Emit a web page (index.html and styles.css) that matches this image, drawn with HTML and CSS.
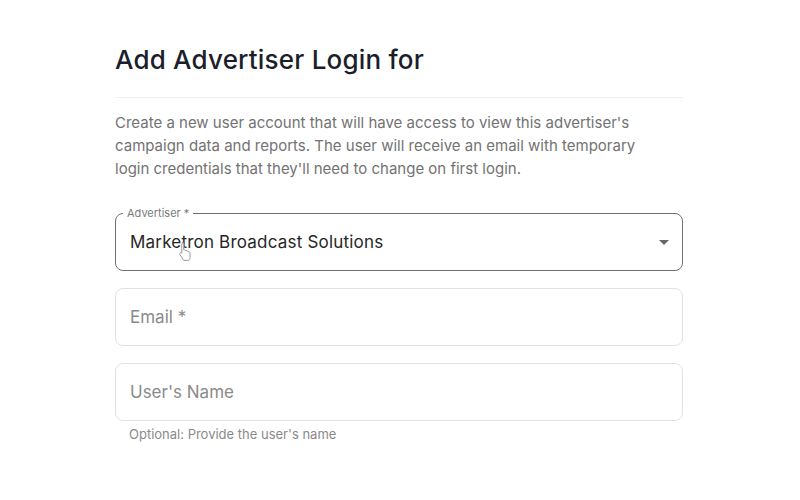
FILE: index.html
```html
<!DOCTYPE html>
<html lang="en">
<head>
    <meta charset="UTF-8">
    <meta name="viewport" content="width=device-width, initial-scale=1.0">
    <title>Add Advertiser Login</title>
    <link rel="stylesheet" href="styles.css">
</head>
<body>
    <div class="container">
        <h1>Add Advertiser Login for</h1>
        <p class="intro">Create a new user account that will have access to view this advertiser's campaign data and reports. The user will receive an email with temporary login credentials that they'll need to change on first login.</p>

        <form class="login-form">
            <div class="field field-select">
                <span class="field-label">Advertiser *</span>
                <span class="field-value">Marketron Broadcast Solutions</span>
                <svg class="caret" width="10" height="5" viewBox="0 0 10 5"><path d="M0 0h10L5 5z" fill="#666"/></svg>
                <!-- pointer cursor from the screen capture -->
                <svg class="cursor" width="16" height="20" viewBox="0 0 14 18"><path d="M4.5 1.5c.8 0 1.4.6 1.4 1.4v5.2l.6-.1c.6-.1 1.2.3 1.3.8l.5-.1c.6-.1 1.2.3 1.3.8l.4-.1c.7-.1 1.3.4 1.4 1.1l.2 3c.1 1.5-.4 2.9-1.3 3.9H5.8L2.4 12.2c-.4-.6-.2-1.3.4-1.6.4-.2 1-.1 1.3.3V2.9c0-.8.6-1.4 1.4-1.4z" fill="#fff" stroke="#999" stroke-width=".9" stroke-linejoin="round"/></svg>
            </div>

            <div class="field">
                <span class="placeholder">Email *</span>
            </div>

            <div class="field">
                <span class="placeholder">User's Name</span>
            </div>
            <div class="helper">Optional: Provide the user's name</div>
        </form>
    </div>
</body>
</html>
```

FILE: styles.css
```css
body {
    margin: 0;
    background-color: #ffffff;
    font-family: "Inter", "Noto Sans", sans-serif;
}

.container {
    width: 568px;
    margin-left: 115px;
}

h1 {
    margin: 0;
    padding: 44px 0 21px;
    font-size: 26px;
    line-height: 32px;
    font-weight: 500;
    letter-spacing: 0.2px;
    color: #1b1e2b;
    border-bottom: 1px solid #f0f0f0;
}

.intro {
    max-width: 548px;
    margin: 13px 0 0;
    font-size: 15px;
    line-height: 23px;
    color: #737373;
}

.login-form {
    display: flex;
    flex-direction: column;
    gap: 17px;
    margin-top: 33px;
}

.field {
    position: relative;
    display: flex;
    align-items: center;
    height: 56px;
    padding: 0 14px;
    border: 1px solid #e2e2e2;
    border-radius: 8px;
}

.field-select {
    border-color: #707070;
}

.field-label {
    position: absolute;
    top: -9px;
    left: 7px;
    padding: 0 4px;
    background-color: #ffffff;
    font-size: 11px;
    line-height: 16px;
    color: #7a7a7a;
}

.field-value {
    flex: 1;
    font-size: 17px;
    letter-spacing: 0.2px;
    color: #262626;
}

.placeholder {
    font-size: 17px;
    color: #8a8a8a;
}

.caret {
    margin-right: -1px;
}

.cursor {
    position: absolute;
    left: 61px;
    top: 27px;
}

.helper {
    margin-top: -12px;
    padding-left: 14px;
    font-size: 13px;
    line-height: 16px;
    color: #8a8a8a;
}
```
